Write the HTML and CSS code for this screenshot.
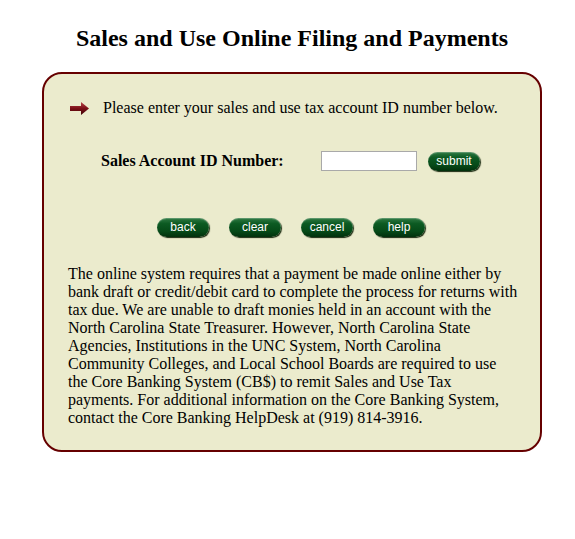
FILE: index.html
```html
<!DOCTYPE html>
<html lang="en">
<head>
    <meta charset="UTF-8">
    <title>Sales and Use Online Filing and Payments</title>
    <link rel="stylesheet" href="styles.css">
</head>
<body>
    <div class="page">
        <h1>Sales and Use Online Filing and Payments</h1>

        <div class="panel">
            <div class="intro">
                <svg class="arrow" width="19" height="13" viewBox="0 0 19 13">
                    <defs>
                        <linearGradient id="arrowFill" x1="0" y1="0" x2="0" y2="1">
                            <stop offset="0" stop-color="#b8444a"/>
                            <stop offset="0.5" stop-color="#7a0f16"/>
                            <stop offset="1" stop-color="#3d0006"/>
                        </linearGradient>
                    </defs>
                    <path d="M0 4 H11 V0 L19 6.5 L11 13 V9 H0 Z" fill="url(#arrowFill)"/>
                </svg>
                <span>Please enter your sales and use tax account ID number below.</span>
            </div>

            <form class="account" onsubmit="return false;">
                <label for="accountId">Sales Account ID Number:</label>
                <input type="text" id="accountId">
                <button class="pill" type="submit">submit</button>
            </form>

            <div class="actions">
                <button class="pill" type="button">back</button>
                <button class="pill" type="button">clear</button>
                <button class="pill" type="button">cancel</button>
                <button class="pill" type="button">help</button>
            </div>

            <p class="notice">The online system requires that a payment be made online either by bank draft or credit/debit card to complete the process for returns with tax due. We are unable to draft monies held in an account with the North Carolina State Treasurer. However, North Carolina State Agencies, Institutions in the UNC System, North Carolina Community Colleges, and Local School Boards are required to use the Core Banking System (CB$) to remit Sales and Use Tax payments. For additional information on the Core Banking System, contact the Core Banking HelpDesk at (919) 814-3916.</p>
        </div>
    </div>
</body>
</html>
```

FILE: styles.css
```css
body {
    margin: 0;
    background: #fff;
    color: #000;
    font-family: "Liberation Serif", "Times New Roman", serif;
    font-size: 16px;
}
.page {
    width: 500px;
    margin-left: 42px;
}
h1 {
    font-size: 24px;
    font-weight: bold;
    text-align: center;
    margin: 0 0 20px 0;
    padding-top: 24px;
    line-height: 28px;
}
.panel {
    border: 2px solid #660000;
    border-radius: 20px;
    background: #ebebcd;
    padding: 25px 21px 23px 24px;
}
.intro {
    display: flex;
    align-items: center;
    height: 18px;
    line-height: 18px;
    padding-left: 2px;
}
.arrow {
    margin-right: 14px;
    flex-shrink: 0;
}
.account {
    display: flex;
    align-items: center;
    height: 20px;
    margin: 34px 0 0 0;
    padding-left: 33px;
}
.account label {
    font-weight: bold;
    width: 220px;
}
.account input {
    width: 96px;
    height: 20px;
    box-sizing: border-box;
    border: 1px solid #a9a9a9;
    background: #fff;
    padding: 0 3px;
    margin: 0 11px 0 0;
    font-size: 13px;
}
.pill {
    width: 52px;
    height: 19px;
    padding: 0 0 1px 0;
    border: none;
    border-radius: 10px;
    background: linear-gradient(to bottom, #2f7a43 0%, #0c5a22 30%, #064a18 70%, #02300c 100%);
    box-shadow: 1px 1px 1px #1a2a10, inset 0 1px 1px rgba(255, 255, 255, 0.25);
    color: #fff;
    font-family: "Liberation Sans", Arial, sans-serif;
    font-size: 12px;
    line-height: 18px;
    cursor: pointer;
}
.pill:hover {
    background: linear-gradient(to bottom, #3c8c52 0%, #16702e 30%, #0a5a20 70%, #043c12 100%);
}
.actions {
    display: flex;
    justify-content: center;
    gap: 20px;
    margin-top: 47px;
    height: 19px;
    padding-right: 5px;
}
.notice {
    margin: 28px 0 0 0;
    line-height: 18px;
}
```
